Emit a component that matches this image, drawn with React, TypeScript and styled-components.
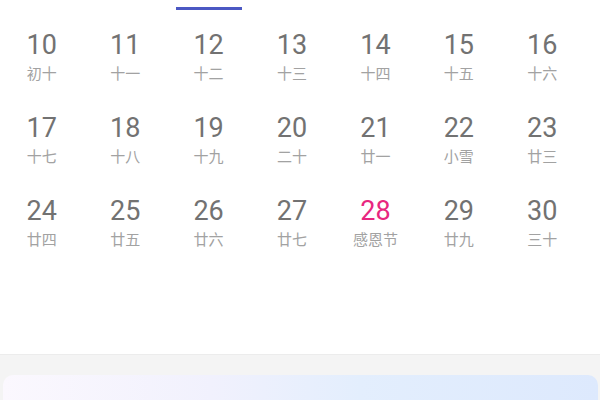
import React from "react";
import styled, { createGlobalStyle } from "styled-components";

const Global = createGlobalStyle`
  html, body { margin: 0; padding: 0; background: #ffffff; overflow: hidden; }
  body { width: 600px; height: 400px; font-family: Roboto, "Noto Sans CJK SC", sans-serif; }
`;

const Page = styled.div`
  width: 600px;
  height: 400px;
  display: flex;
  flex-direction: column;
  overflow: hidden;
  background: #ffffff;
`;

const Calendar = styled.div`
  flex: 1;
  display: grid;
  grid-template-columns: repeat(7, 1fr);
  grid-auto-rows: 83px;
  align-content: start;
  padding: 0 16px 0 0;
  margin-top: -67px;
`;

const Cell = styled.div`
  display: flex;
  flex-direction: column;
  align-items: center;
  padding-top: 13px;
`;

const Day = styled.div<{ $holiday?: boolean }>`
  font-family: Roboto, sans-serif;
  font-size: 27px;
  line-height: 32px;
  color: ${(p) => (p.$holiday ? "#e8277f" : "#727272")};
`;

const Lunar = styled.div`
  margin-top: 3px;
  font-family: "Noto Sans CJK SC", sans-serif;
  font-size: 15px;
  line-height: 18px;
  color: #a2a2a2;
  white-space: nowrap;
`;

const Underline = styled.div<{ $on?: boolean }>`
  margin-top: 8px;
  width: 66px;
  height: 3px;
  background: ${(p) => (p.$on ? "#4b58c3" : "transparent")};
`;

const Footer = styled.div`
  height: 46px;
  background: #f4f4f4;
  border-top: 1px solid #ececec;
  padding: 20px 2px 0 3px;
  box-sizing: border-box;
  display: flex;
`;

const Card = styled.div`
  flex: 1;
  border-radius: 10px 10px 0 0;
  background: linear-gradient(90deg, #fbf8fe 0%, #f1f1fd 35%, #e3eefd 60%, #dde9fd 100%);
`;

type D = { n: number; l: string; h?: boolean; sel?: boolean };

const days: D[] = [
  { n: 3, l: "初三" }, { n: 4, l: "初四" }, { n: 5, l: "初五", sel: true }, { n: 6, l: "初六" },
  { n: 7, l: "立冬" }, { n: 8, l: "初八" }, { n: 9, l: "初九" },
  { n: 10, l: "初十" }, { n: 11, l: "十一" }, { n: 12, l: "十二" }, { n: 13, l: "十三" },
  { n: 14, l: "十四" }, { n: 15, l: "十五" }, { n: 16, l: "十六" },
  { n: 17, l: "十七" }, { n: 18, l: "十八" }, { n: 19, l: "十九" }, { n: 20, l: "二十" },
  { n: 21, l: "廿一" }, { n: 22, l: "小雪" }, { n: 23, l: "廿三" },
  { n: 24, l: "廿四" }, { n: 25, l: "廿五" }, { n: 26, l: "廿六" }, { n: 27, l: "廿七" },
  { n: 28, l: "感恩节", h: true }, { n: 29, l: "廿九" }, { n: 30, l: "三十" },
];

export default function App() {
  return (
    <Page>
      <Global />
      <Calendar>
        {days.map((d) => (
          <Cell key={d.n}>
            <Day $holiday={d.h}>{d.n}</Day>
            <Lunar>{d.l}</Lunar>
            <Underline $on={d.sel} />
          </Cell>
        ))}
      </Calendar>
      <Footer>
        <Card />
      </Footer>
    </Page>
  );
}
